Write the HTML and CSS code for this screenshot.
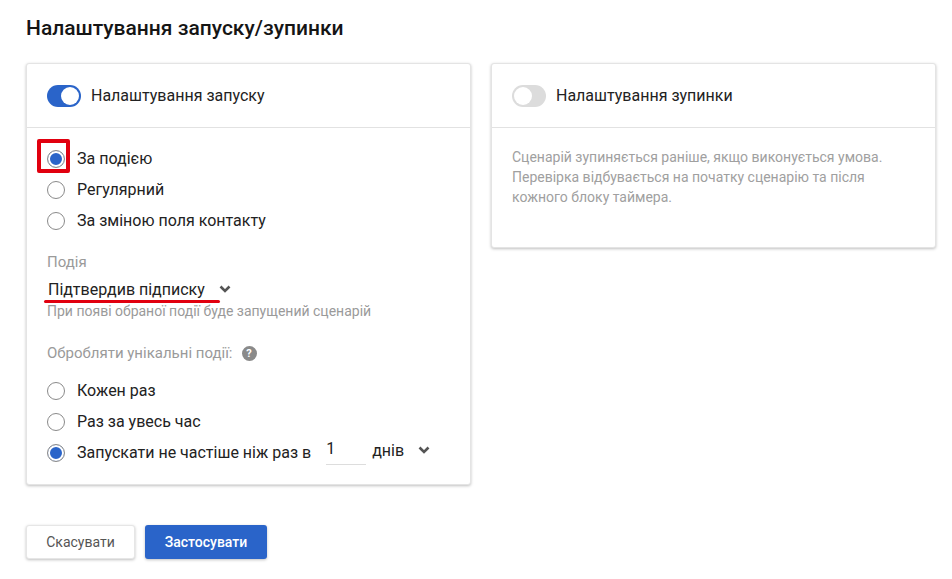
FILE: index.html
```html
<!DOCTYPE html>
<html lang="uk">
<head>
<meta charset="utf-8">
<title>Налаштування запуску/зупинки</title>
<link rel="stylesheet" href="styles.css">
</head>
<body>
<main class="page">
  <h1 class="title">Налаштування запуску/зупинки</h1>
  <div class="cards">
    <section class="card card-start">
      <header class="card-head">
        <span class="toggle toggle-on"><span class="knob"></span></span>
        <span class="head-label">Налаштування запуску</span>
      </header>
      <div class="card-body">
        <div class="radios">
          <div class="radio-row annotated"><span class="radio radio-on"></span><span>За подією</span><span class="red-box"></span></div>
          <div class="radio-row"><span class="radio"></span><span>Регулярний</span></div>
          <div class="radio-row"><span class="radio"></span><span>За зміною поля контакту</span></div>
        </div>
        <div class="field-label">Подія</div>
        <div class="select">
          <span>Підтвердив підписку</span>
          <svg class="chev" viewBox="0 0 12 8" width="12" height="8"><path d="M1.5 1.5 6 6l4.5-4.5" fill="none" stroke="#555" stroke-width="2.6"/></svg>
          <span class="red-line"></span>
        </div>
        <div class="hint">При появі обраної події буде запущений сценарій</div>
        <div class="unique-label">
          <span>Обробляти унікальні події:</span>
          <span class="help">?</span>
        </div>
        <div class="radios">
          <div class="radio-row"><span class="radio"></span><span>Кожен раз</span></div>
          <div class="radio-row"><span class="radio"></span><span>Раз за увесь час</span></div>
          <div class="radio-row">
            <span class="radio radio-on"></span><span>Запускати не частіше ніж раз в</span>
            <span class="num-input">1</span>
            <span class="unit">днів</span>
            <svg class="chev chev-unit" viewBox="0 0 12 8" width="12" height="8"><path d="M1.5 1.5 6 6l4.5-4.5" fill="none" stroke="#555" stroke-width="2.6"/></svg>
          </div>
        </div>
      </div>
    </section>
    <section class="card card-stop">
      <header class="card-head">
        <span class="toggle"><span class="knob"></span></span>
        <span class="head-label">Налаштування зупинки</span>
      </header>
      <p class="stop-text">Сценарій зупиняється раніше, якщо виконується умова.<br>Перевірка відбувається на початку сценарію та після<br>кожного блоку таймера.</p>
    </section>
  </div>
  <div class="actions">
    <button class="btn btn-cancel" type="button">Скасувати</button>
    <button class="btn btn-apply" type="button">Застосувати</button>
  </div>
</main>
</body>
</html>
```
FILE: styles.css
```css
* { box-sizing: border-box; }
html, body { margin: 0; padding: 0; background: #fff; }
body { font-family: Roboto, "Liberation Sans", sans-serif; color: #1f1f1f; overflow: hidden; }
.page { width: 952px; height: 579px; padding: 16px 16px 0 26px; }
.title { margin: 0; font-size: 21px; line-height: 24px; font-weight: 500; color: #151515; }
.cards { display: flex; align-items: flex-start; gap: 20px; margin-top: 23px; }
.card { width: 445px; background: #fff; border: 1px solid #e4e4e4; border-radius: 3px; box-shadow: 0 1px 3px rgba(0,0,0,.25); }
.card-start { height: 422px; }
.card-stop { height: 185px; }
.card-head { height: 64px; display: flex; align-items: center; gap: 10px; padding-left: 20px; border-bottom: 1px solid #e2e2e2; }
.head-label { margin-top: -1px; font-size: 16px; color: #222; }
.toggle { width: 34px; height: 22px; border-radius: 11px; background: #dcdcdc; display: flex; align-items: center; padding: 2px; }
.toggle-on { background: #2a64c9; justify-content: flex-end; }
.knob { width: 18px; height: 18px; border-radius: 50%; background: #fff; }
.card-body { padding: 15px 20px 0; }
.radios { display: flex; flex-direction: column; }
.radio-row { position: relative; display: flex; align-items: center; height: 31px; font-size: 16px; color: #222; }
.radio { width: 18px; height: 18px; border: 1px solid #8a8a8a; border-radius: 50%; margin-right: 12px; flex: none; background: #fff; }
.radio-on { background: #2a64c9; background-clip: padding-box; box-shadow: inset 0 0 0 2px #fff; }
.red-box { position: absolute; left: -10px; top: -4px; width: 33px; height: 34px; border: 4px solid #e1000f; border-radius: 2px; }
.field-label { margin-top: 17px; font-size: 15px; line-height: 18px; color: #9a9a9a; }
.select { position: relative; display: flex; align-items: center; gap: 14px; height: 24px; margin-top: 6px; padding-left: 1px; font-size: 16px; color: #222; }
.red-line { position: absolute; left: -3px; bottom: -2px; width: 176px; height: 3px; border-radius: 2px; background: #e1000f; }
.hint { margin-top: 1px; font-size: 14px; line-height: 18px; color: #9a9a9a; }
.unique-label { display: flex; align-items: center; gap: 9px; margin-top: 24px; margin-bottom: 13px; font-size: 15px; line-height: 18px; color: #9a9a9a; }
.help { width: 15px; height: 15px; border-radius: 50%; background: #8a8a8a; color: #fff; font-size: 11px; font-weight: 700; line-height: 15px; text-align: center; }
.num-input { width: 40px; height: 28px; margin-left: 15px; padding: 1px 0 0; border-bottom: 1px solid #ddd; font-size: 16px; line-height: 22px; margin-top: -4px; }
.unit { margin-left: 6px; margin-top: -5px; }
.chev-unit { margin-left: 14px; margin-top: -5px; }
.stop-text { margin: 0; padding: 19px 20px 0; font-size: 14px; line-height: 20px; color: #a0a0a0; }
.actions { display: flex; gap: 10px; margin-top: 40px; }
.btn { height: 34px; border-radius: 3px; font: inherit; font-size: 14px; }
.btn-cancel { width: 109px; background: #fff; border: 1px solid #e6e6e6; color: #555; box-shadow: 0 1px 3px rgba(0,0,0,.25); }
.btn-apply { width: 122px; background: #2a64c9; border: 0; color: #fff; font-weight: 500; box-shadow: 0 1px 3px rgba(0,0,0,.25); }
```
